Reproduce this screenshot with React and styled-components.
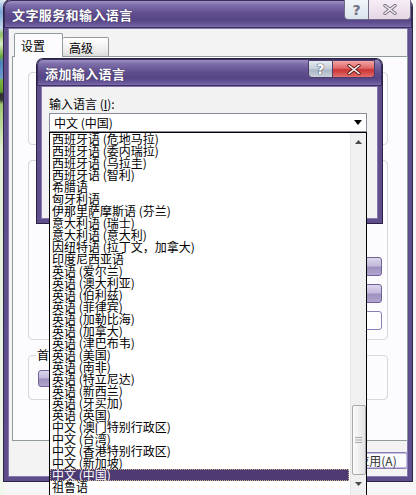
import styled, { createGlobalStyle } from "styled-components";

const GlobalStyle = createGlobalStyle`
  html, body { margin: 0; padding: 0; }
  body {
    background: #f5f5f5;
    font-family: "Noto Sans CJK SC", "Noto Sans", sans-serif;
    overflow: hidden;
  }
`;

const languages = [
  "西班牙语 (危地马拉)",
  "西班牙语 (委内瑞拉)",
  "西班牙语 (乌拉圭)",
  "西班牙语 (智利)",
  "希腊语",
  "匈牙利语",
  "伊那里萨摩斯语 (芬兰)",
  "意大利语 (瑞士)",
  "意大利语 (意大利)",
  "因纽特语 (拉丁文，加拿大)",
  "印度尼西亚语",
  "英语 (爱尔兰)",
  "英语 (澳大利亚)",
  "英语 (伯利兹)",
  "英语 (菲律宾)",
  "英语 (加勒比海)",
  "英语 (加拿大)",
  "英语 (津巴布韦)",
  "英语 (美国)",
  "英语 (南非)",
  "英语 (特立尼达)",
  "英语 (新西兰)",
  "英语 (牙买加)",
  "英语 (英国)",
  "中文 (澳门特别行政区)",
  "中文 (台湾)",
  "中文 (香港特别行政区)",
  "中文 (新加坡)",
  "中文 (中国)",
  "祖鲁语",
];

export default function App() {
  return (
    <Page>
      <GlobalStyle />
      <DesktopStrip />
      <Window>
        <TitleBar>
          <TitleText>文字服务和输入语言</TitleText>
          <CaptionButtons $outer>
            <CaptionButton $kind="help" $outer>?</CaptionButton>
            <CaptionButton $kind="close" $outer>
              <CloseGlyph dark />
            </CaptionButton>
          </CaptionButtons>
        </TitleBar>
        <Body>
          <TabRow>
            <Tab $active>设置</Tab>
            <Tab>高级</Tab>
          </TabRow>
          <Panel>
            <GroupBox $height={73} />
            <GroupBox $height={180} $gap={15}>
              <SideButtons>
                <PurpleButton />
                <PurpleButton />
                <PurpleButton $plain />
              </SideButtons>
            </GroupBox>
            <FieldGroup>
              <GroupLegend>首选项</GroupLegend>
              <PurpleButton $wide />
            </FieldGroup>
          </Panel>
          <ButtonRow>
            <DialogButton>确定</DialogButton>
            <DialogButton>取消</DialogButton>
            <DialogButton>应用(A)</DialogButton>
          </ButtonRow>
        </Body>
      </Window>

      <InnerDialog>
        <TitleBar $small>
          <TitleText>添加输入语言</TitleText>
          <CaptionButtons>
            <CaptionButton $kind="help">?</CaptionButton>
            <CaptionButton $kind="close">
              <CloseGlyph />
            </CaptionButton>
          </CaptionButtons>
        </TitleBar>
        <InnerBody>
          <FieldLabel>
            输入语言 (<u>I</u>):
          </FieldLabel>
          <Combo>
            <span>中文 (中国)</span>
            <svg width="8" height="5" viewBox="0 0 8 5">
              <polygon points="0,0 8,0 4,5" fill="#000" />
            </svg>
          </Combo>
        </InnerBody>
      </InnerDialog>

      <DropList>
        <Items>
          {languages.map((name, i) => (
            <Item key={name} $selected={i === 28}>
              {name}
            </Item>
          ))}
        </Items>
        <ScrollBar>
          <ArrowButton>
            <svg width="7" height="4" viewBox="0 0 7 4">
              <polygon points="0,4 7,4 3.5,0" fill="#4a4a4a" />
            </svg>
          </ArrowButton>
          <Thumb>
            <svg width="7" height="8" viewBox="0 0 7 8">
              <path d="M0 1.5h7M0 4h7M0 6.5h7" stroke="#a9a9a9" strokeWidth="1" />
            </svg>
          </Thumb>
          <ArrowButton>
            <svg width="7" height="4" viewBox="0 0 7 4">
              <polygon points="0,0 7,0 3.5,4" fill="#4a4a4a" />
            </svg>
          </ArrowButton>
        </ScrollBar>
      </DropList>
    </Page>
  );
}

function CloseGlyph({ dark }) {
  return (
    <svg width="14" height="11" viewBox="0 0 14 11">
      <path
        d="M2 1.5l10 8M12 1.5l-10 8"
        stroke={dark ? "#77707f" : "#5a1818"}
        strokeWidth="3.4"
        strokeLinecap="round"
      />
      <path
        d="M2 1.5l10 8M12 1.5l-10 8"
        stroke={dark ? "#f4eef4" : "#fff"}
        strokeWidth="1.6"
        strokeLinecap="round"
      />
    </svg>
  );
}

const Page = styled.div`
  position: relative;
  width: 416px;
  height: 495px;
  overflow: hidden;
  display: flex;
  align-items: flex-start;
  background: #f6f6f6;
`;

const DesktopStrip = styled.div`
  width: 4px;
  height: 495px;
  background: linear-gradient(
    to bottom,
    #dfe9f4 0px,
    #7aa7d6 12px,
    #c9dced 28px,
    #8fc063 34px,
    #d9ebc8 44px,
    #6aa83a 56px,
    #4d84bd 62px,
    #6c9bd0 78px,
    #7bb640 80px,
    #5e9a2e 92px,
    #2f2f2f 94px,
    #3a3a3a 100px,
    #9cc46c 104px,
    #e3efd6 150px,
    #f2f7ec 495px
  );
`;

const Window = styled.div`
  width: 408px;
  display: flex;
  flex-direction: column;
  border-radius: 7px 7px 0 0;
  box-shadow: 0 0 0 1px #2e2448;
`;

const TitleBar = styled.div`
  height: ${({ $small }) => ($small ? "27px" : "28px")};
  flex-shrink: 0;
  display: flex;
  align-items: flex-start;
  border-radius: ${({ $small }) => ($small ? "6px 6px 0 0" : "7px 7px 0 0")};
  background: linear-gradient(
    to bottom,
    #a69ac9 0%,
    #7d6da9 18%,
    #5f4d8d 50%,
    #574685 72%,
    #6c5b9d 90%,
    #8a7bb6 100%
  );
  box-shadow: inset 0 0 0 1px #3b2e5e;
  color: #fff;
`;

const TitleText = styled.span`
  margin: 6px 0 0 8px;
  font-size: 13px;
  font-weight: 700;
  line-height: 18px;
  letter-spacing: 0.4px;
  text-shadow: 0 0 1px #2a1f44;
`;

const CaptionButtons = styled.div`
  margin-left: auto;
  margin-right: ${({ $outer }) => ($outer ? "1px" : "7px")};
  margin-top: ${({ $outer }) => ($outer ? "-1px" : "1px")};
  display: flex;
`;

const CaptionButton = styled.div`
  height: ${({ $outer }) => ($outer ? "21px" : "18px")};
  width: ${({ $kind }) => ($kind === "help" ? "25px" : "42px")};
  display: flex;
  align-items: center;
  justify-content: center;
  box-sizing: border-box;
  border: 1px solid ${({ $outer }) => ($outer ? "#6f6a86" : "#4d3d6d")};
  border-left: ${({ $kind }) => ($kind === "help" ? undefined : "none")};
  border-radius: ${({ $kind }) => ($kind === "help" ? "0 0 0 4px" : "0 0 4px 0")};
  font-family: "DejaVu Sans", sans-serif;
  font-size: 14px;
  font-weight: 700;
  color: ${({ $outer }) => ($outer ? "#6f6f80" : "#fff")};
  text-shadow: ${({ $outer }) => ($outer ? "none" : "0 0 1px #33334a, 0 0 1px #33334a")};
  background: ${({ $kind, $outer }) =>
    $outer
      ? $kind === "help"
        ? "linear-gradient(#f1f5f9, #dae3ed)"
        : "linear-gradient(#f6eef6, #e6d6e7)"
      : $kind === "help"
      ? "linear-gradient(#e6ebf1 0%, #c3ccd8 50%, #aab5c4 55%, #c9d2dc 100%)"
      : "linear-gradient(#f2a6a6 0%, #e06767 45%, #c93434 55%, #e46d6d 100%)"};
`;

const Body = styled.div`
  height: 453px;
  box-sizing: border-box;
  display: flex;
  flex-direction: column;
  padding: 5px 0 8px 4px;
  background: #f3f3f3;
  border: solid #5f4e8c;
  border-width: 0 4px 4px;
  box-shadow: inset 0 0 0 1px #8878b0;
`;

const TabRow = styled.div`
  height: 24px;
  margin: 0 0 -1px 2px;
  display: flex;
  align-items: flex-end;
  position: relative;
  z-index: 1;
`;

const Tab = styled.div`
  box-sizing: border-box;
  width: ${({ $active }) => ($active ? "49px" : "46px")};
  height: ${({ $active }) => ($active ? "24px" : "20px")};
  padding-left: 6px;
  display: flex;
  align-items: center;
  font-size: 12px;
  color: #000;
  border: 1px solid #919b9c;
  border-bottom: ${({ $active }) => ($active ? "none" : "1px solid #919b9c")};
  border-left: ${({ $active }) => ($active ? "1px solid #919b9c" : "none")};
  border-radius: 2px 2px 0 0;
  background: ${({ $active }) =>
    $active ? "#fcfcfe" : "linear-gradient(#ffffff, #ececec 70%, #dcdcdc)"};
`;

const Panel = styled.div`
  width: 396px;
  height: 385px;
  box-sizing: border-box;
  padding: 15px 0 0 15px;
  display: flex;
  flex-direction: column;
  align-items: flex-start;
  border: 1px solid #919b9c;
  background: #fcfcfe;
`;

const GroupBox = styled.div`
  width: 360px;
  height: ${({ $height }) => $height}px;
  margin-top: ${({ $gap }) => $gap || 0}px;
  box-sizing: border-box;
  border: 1px solid #d6d6de;
  border-radius: 4px;
  display: flex;
  flex-direction: column;
`;

const SideButtons = styled.div`
  margin: 96px 5px 0 auto;
  display: flex;
  flex-direction: column;
  gap: 8px;
`;

const PurpleButton = styled.div`
  width: ${({ $wide }) => ($wide ? "90px" : "82px")};
  height: ${({ $wide }) => ($wide ? "17px" : "19px")};
  margin-top: ${({ $wide }) => ($wide ? "8px" : "0")};
  box-sizing: border-box;
  border-radius: 3px;
  border: 1px solid ${({ $plain }) => ($plain ? "#8b7eb6" : "#6f6298")};
  background: ${({ $plain }) =>
    $plain
      ? "#ffffff"
      : "linear-gradient(#ddd6ec 0%, #c4badb 45%, #9d90bf 55%, #b2a7cf 100%)"};
`;

const FieldGroup = styled.fieldset`
  width: 360px;
  height: 52px;
  margin: 8px 0 0;
  padding: 0 0 0 9px;
  box-sizing: border-box;
  min-width: 0;
  border: 1px solid #d6d6de;
  border-radius: 4px;
`;

const GroupLegend = styled.legend`
  margin-left: -2px;
  padding: 0 1px;
  font-size: 12px;
  line-height: 14px;
  color: #000;
`;

const ButtonRow = styled.div`
  margin-top: 11px;
  display: flex;
  justify-content: flex-end;
  gap: 6px;
`;

const DialogButton = styled.div`
  width: 62px;
  height: 17px;
  box-sizing: border-box;
  display: flex;
  align-items: center;
  justify-content: center;
  font-size: 12px;
  color: #333;
  border: 1px solid #8b7eb6;
  border-radius: 3px;
  background: #fbfbfd;
  box-shadow: inset 0 0 0 1px #c9bfe2;
`;

const InnerDialog = styled.div`
  position: absolute;
  left: 37px;
  top: 59px;
  width: 345px;
  display: flex;
  flex-direction: column;
  border-radius: 6px 6px 0 0;
  box-shadow: 0 0 0 1px #2b2143;
  z-index: 2;
`;

const InnerBody = styled.div`
  height: 137px;
  box-sizing: border-box;
  padding: 10px 0 0 8px;
  background: #f2f2f2;
  border: solid #5f4e8c;
  border-width: 0 4px 4px;
  box-shadow: inset 0 0 0 1px #8878b0;
`;

const FieldLabel = styled.div`
  font-size: 12px;
  line-height: 16px;
  color: #000;

  u {
    text-decoration-thickness: 1px;
  }
`;

const Combo = styled.div`
  width: 318px;
  height: 19px;
  margin-top: 1px;
  box-sizing: border-box;
  padding: 0 4px 0 4px;
  display: flex;
  align-items: center;
  justify-content: space-between;
  font-size: 12px;
  color: #000;
  background: #fff;
  border: 1px solid #8c8c9a;
`;

const DropList = styled.div`
  position: absolute;
  left: 49px;
  top: 132px;
  width: 318px;
  height: 366px;
  box-sizing: border-box;
  display: flex;
  background: #fff;
  border: 1px solid #000;
  z-index: 3;
`;

const Items = styled.div`
  flex: 1;
  display: flex;
  flex-direction: column;
`;

const Item = styled.div`
  height: 12px;
  padding-left: 2px;
  margin-right: 1px;
  font-size: 12px;
  line-height: 12px;
  white-space: nowrap;
  color: ${({ $selected }) => ($selected ? "#fff" : "#000")};
  background: ${({ $selected }) => ($selected ? "#4d3a72" : "transparent")};
  outline: ${({ $selected }) => ($selected ? "1px dotted #c8b98a" : "none")};
  outline-offset: -1px;
`;

const ScrollBar = styled.div`
  width: 15px;
  display: flex;
  flex-direction: column;
  align-items: center;
  background: #f0f0f0;
  border-left: 1px solid #e6e6e6;
`;

const ArrowButton = styled.div`
  height: 17px;
  width: 100%;
  display: flex;
  align-items: center;
  justify-content: center;
`;

const Thumb = styled.div`
  width: 14px;
  height: 70px;
  margin-top: 255px;
  box-sizing: border-box;
  display: flex;
  align-items: center;
  justify-content: center;
  border: 1px solid #a9a9ad;
  border-radius: 2px;
  background: linear-gradient(to right, #fbfbfb, #e3e3e3);
`;
